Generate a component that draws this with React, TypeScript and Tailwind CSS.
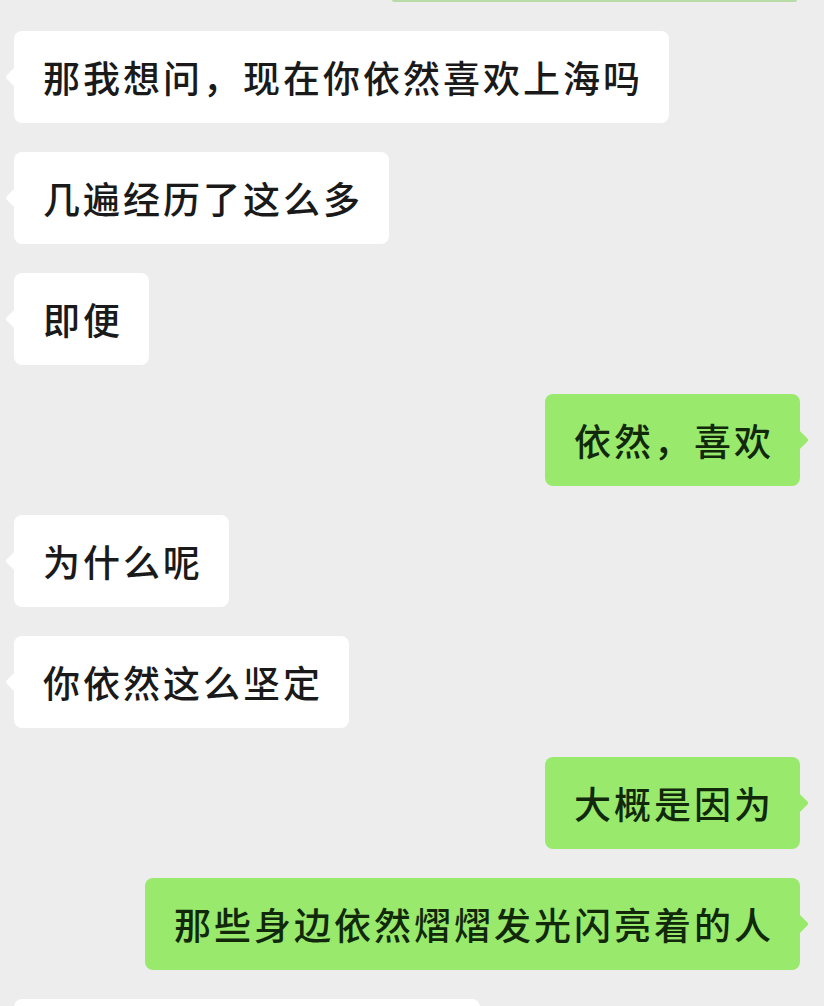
type Msg = { text: string; me?: boolean };

const messages: Msg[] = [
  { text: "那我想问，现在你依然喜欢上海吗" },
  { text: "几遍经历了这么多" },
  { text: "即便" },
  { text: "依然，喜欢", me: true },
  { text: "为什么呢" },
  { text: "你依然这么坚定" },
  { text: "大概是因为", me: true },
  { text: "那些身边依然熠熠发光闪亮着的人", me: true },
];

function Bubble({ text, me }: Msg) {
  return (
    <div className={me ? "flex justify-end pr-[24px]" : "flex justify-start pl-[14px]"}>
      <div
        className={
          me
            ? "relative flex h-[92px] items-center rounded-[8px] bg-[#98e96c] pl-[29px] pr-[26px] text-[#11290a]"
            : "relative flex h-[92px] items-center rounded-[8px] bg-white pl-[29px] pr-[26px] text-[#1a1a1a]"
        }
      >
        <span
          className={
            me
              ? "absolute right-[-6px] top-1/2 h-[14px] w-[14px] -translate-y-1/2 rotate-45 rounded-[2px] bg-[#98e96c]"
              : "absolute left-[-6px] top-1/2 h-[14px] w-[14px] -translate-y-1/2 rotate-45 rounded-[2px] bg-white"
          }
        />
        <span className="relative whitespace-nowrap text-[37px] font-medium leading-none tracking-[3px]">{text}</span>
      </div>
    </div>
  );
}

export default function App() {
  return (
    <div
      className="flex h-[1006px] w-[824px] flex-col gap-[29px] overflow-hidden bg-[#ededed]"
      style={{ fontFamily: '"Noto Sans CJK SC", "Noto Sans", sans-serif' }}
    >
      <div className="flex justify-end pr-[27px]">
        <div className="h-[2px] w-[405px] rounded-b-[4px] bg-[#b9dca6]" />
      </div>
      {messages.map((m, i) => (
        <Bubble key={i} {...m} />
      ))}
      <div className="flex pl-[14px]">
        <div className="h-[92px] w-[466px] shrink-0 rounded-[8px] bg-white" />
      </div>
    </div>
  );
}
